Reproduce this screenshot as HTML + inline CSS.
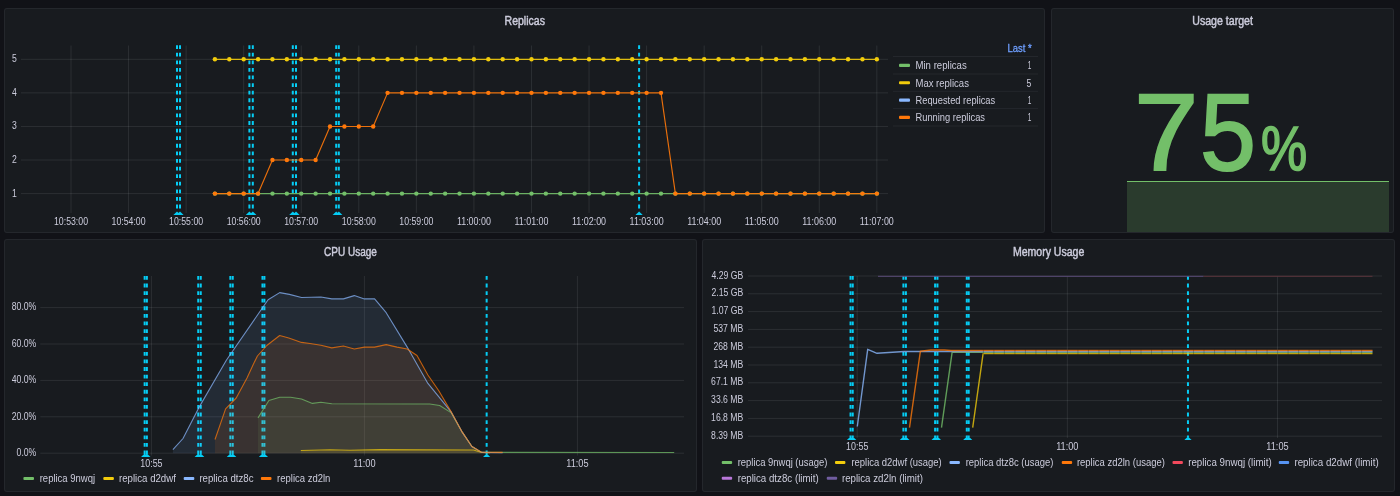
<!DOCTYPE html>
<html><head><meta charset="utf-8"><style>
html,body{margin:0;padding:0;}
body{width:1400px;height:496px;overflow:hidden;background:#111217;position:relative;font-family:"Liberation Sans",sans-serif;}
.p{position:absolute;box-sizing:border-box;background:#181b1f;border:1px solid rgba(204,204,220,0.07);border-radius:3px;}
.t{position:absolute;font-size:12px;color:#ccccdc;white-space:nowrap;}
svg{position:absolute;left:0;top:0;will-change:transform;}
svg text{font-family:"Liberation Sans",sans-serif;fill:#ccccdc;}
</style></head><body>
<div class="p" style="left:4px;top:8px;width:1041px;height:225px"></div>
<div class="p" style="left:1051px;top:8px;width:343px;height:225px"></div>
<div class="p" style="left:4px;top:239px;width:693px;height:253px"></div>
<div class="p" style="left:702px;top:239px;width:693px;height:253px"></div>
<svg width="1400" height="496" viewBox="0 0 1400 496">
<text x="524.75" y="25.1" font-size="12" text-anchor="middle" textLength="40.3" lengthAdjust="spacingAndGlyphs" stroke="#ccccdc" stroke-width="0.45">Replicas</text>
<text x="1222.6" y="25.0" font-size="12" text-anchor="middle" textLength="60.6" lengthAdjust="spacingAndGlyphs" stroke="#ccccdc" stroke-width="0.45">Usage target</text>
<text x="350.45" y="255.7" font-size="12" text-anchor="middle" textLength="52.9" lengthAdjust="spacingAndGlyphs" stroke="#ccccdc" stroke-width="0.45">CPU Usage</text>
<text x="1048.6" y="255.7" font-size="12" text-anchor="middle" textLength="71.4" lengthAdjust="spacingAndGlyphs" stroke="#ccccdc" stroke-width="0.45">Memory Usage</text>
<line x1="21.00" y1="193.60" x2="888.00" y2="193.60" stroke="rgba(240,250,255,0.09)" stroke-width="1" />
<text x="16.70" y="196.60" font-size="10" text-anchor="end" textLength="4.80" lengthAdjust="spacingAndGlyphs" >1</text>
<line x1="21.00" y1="160.02" x2="888.00" y2="160.02" stroke="rgba(240,250,255,0.09)" stroke-width="1" />
<text x="16.70" y="163.02" font-size="10" text-anchor="end" textLength="4.80" lengthAdjust="spacingAndGlyphs" >2</text>
<line x1="21.00" y1="126.45" x2="888.00" y2="126.45" stroke="rgba(240,250,255,0.09)" stroke-width="1" />
<text x="16.70" y="129.45" font-size="10" text-anchor="end" textLength="4.80" lengthAdjust="spacingAndGlyphs" >3</text>
<line x1="21.00" y1="92.87" x2="888.00" y2="92.87" stroke="rgba(240,250,255,0.09)" stroke-width="1" />
<text x="16.70" y="95.87" font-size="10" text-anchor="end" textLength="4.80" lengthAdjust="spacingAndGlyphs" >4</text>
<line x1="21.00" y1="59.30" x2="888.00" y2="59.30" stroke="rgba(240,250,255,0.09)" stroke-width="1" />
<text x="16.70" y="62.30" font-size="10" text-anchor="end" textLength="4.80" lengthAdjust="spacingAndGlyphs" >5</text>
<line x1="71.00" y1="45.50" x2="71.00" y2="213.00" stroke="rgba(240,250,255,0.09)" stroke-width="1" />
<text x="71.00" y="224.60" font-size="10" text-anchor="middle" textLength="34.00" lengthAdjust="spacingAndGlyphs" >10:53:00</text>
<line x1="128.56" y1="45.50" x2="128.56" y2="213.00" stroke="rgba(240,250,255,0.09)" stroke-width="1" />
<text x="128.56" y="224.60" font-size="10" text-anchor="middle" textLength="34.00" lengthAdjust="spacingAndGlyphs" >10:54:00</text>
<line x1="186.12" y1="45.50" x2="186.12" y2="213.00" stroke="rgba(240,250,255,0.09)" stroke-width="1" />
<text x="186.12" y="224.60" font-size="10" text-anchor="middle" textLength="34.00" lengthAdjust="spacingAndGlyphs" >10:55:00</text>
<line x1="243.68" y1="45.50" x2="243.68" y2="213.00" stroke="rgba(240,250,255,0.09)" stroke-width="1" />
<text x="243.68" y="224.60" font-size="10" text-anchor="middle" textLength="34.00" lengthAdjust="spacingAndGlyphs" >10:56:00</text>
<line x1="301.24" y1="45.50" x2="301.24" y2="213.00" stroke="rgba(240,250,255,0.09)" stroke-width="1" />
<text x="301.24" y="224.60" font-size="10" text-anchor="middle" textLength="34.00" lengthAdjust="spacingAndGlyphs" >10:57:00</text>
<line x1="358.80" y1="45.50" x2="358.80" y2="213.00" stroke="rgba(240,250,255,0.09)" stroke-width="1" />
<text x="358.80" y="224.60" font-size="10" text-anchor="middle" textLength="34.00" lengthAdjust="spacingAndGlyphs" >10:58:00</text>
<line x1="416.36" y1="45.50" x2="416.36" y2="213.00" stroke="rgba(240,250,255,0.09)" stroke-width="1" />
<text x="416.36" y="224.60" font-size="10" text-anchor="middle" textLength="34.00" lengthAdjust="spacingAndGlyphs" >10:59:00</text>
<line x1="473.92" y1="45.50" x2="473.92" y2="213.00" stroke="rgba(240,250,255,0.09)" stroke-width="1" />
<text x="473.92" y="224.60" font-size="10" text-anchor="middle" textLength="34.00" lengthAdjust="spacingAndGlyphs" >11:00:00</text>
<line x1="531.48" y1="45.50" x2="531.48" y2="213.00" stroke="rgba(240,250,255,0.09)" stroke-width="1" />
<text x="531.48" y="224.60" font-size="10" text-anchor="middle" textLength="34.00" lengthAdjust="spacingAndGlyphs" >11:01:00</text>
<line x1="589.04" y1="45.50" x2="589.04" y2="213.00" stroke="rgba(240,250,255,0.09)" stroke-width="1" />
<text x="589.04" y="224.60" font-size="10" text-anchor="middle" textLength="34.00" lengthAdjust="spacingAndGlyphs" >11:02:00</text>
<line x1="646.60" y1="45.50" x2="646.60" y2="213.00" stroke="rgba(240,250,255,0.09)" stroke-width="1" />
<text x="646.60" y="224.60" font-size="10" text-anchor="middle" textLength="34.00" lengthAdjust="spacingAndGlyphs" >11:03:00</text>
<line x1="704.16" y1="45.50" x2="704.16" y2="213.00" stroke="rgba(240,250,255,0.09)" stroke-width="1" />
<text x="704.16" y="224.60" font-size="10" text-anchor="middle" textLength="34.00" lengthAdjust="spacingAndGlyphs" >11:04:00</text>
<line x1="761.72" y1="45.50" x2="761.72" y2="213.00" stroke="rgba(240,250,255,0.09)" stroke-width="1" />
<text x="761.72" y="224.60" font-size="10" text-anchor="middle" textLength="34.00" lengthAdjust="spacingAndGlyphs" >11:05:00</text>
<line x1="819.28" y1="45.50" x2="819.28" y2="213.00" stroke="rgba(240,250,255,0.09)" stroke-width="1" />
<text x="819.28" y="224.60" font-size="10" text-anchor="middle" textLength="34.00" lengthAdjust="spacingAndGlyphs" >11:06:00</text>
<line x1="876.84" y1="45.50" x2="876.84" y2="213.00" stroke="rgba(240,250,255,0.09)" stroke-width="1" />
<text x="876.84" y="224.60" font-size="10" text-anchor="middle" textLength="34.00" lengthAdjust="spacingAndGlyphs" >11:07:00</text>
<line x1="177.00" y1="45.20" x2="177.00" y2="212.00" stroke="#05cdf5" stroke-width="2" stroke-dasharray="3.8 3.79"/>
<line x1="180.00" y1="45.20" x2="180.00" y2="212.00" stroke="#05cdf5" stroke-width="2" stroke-dasharray="3.8 3.79"/>
<line x1="249.40" y1="45.20" x2="249.40" y2="212.00" stroke="#05cdf5" stroke-width="2" stroke-dasharray="3.8 3.79"/>
<line x1="252.80" y1="45.20" x2="252.80" y2="212.00" stroke="#05cdf5" stroke-width="2" stroke-dasharray="3.8 3.79"/>
<line x1="292.80" y1="45.20" x2="292.80" y2="212.00" stroke="#05cdf5" stroke-width="2" stroke-dasharray="3.8 3.79"/>
<line x1="296.00" y1="45.20" x2="296.00" y2="212.00" stroke="#05cdf5" stroke-width="2" stroke-dasharray="3.8 3.79"/>
<line x1="336.20" y1="45.20" x2="336.20" y2="212.00" stroke="#05cdf5" stroke-width="2" stroke-dasharray="3.8 3.79"/>
<line x1="338.80" y1="45.20" x2="338.80" y2="212.00" stroke="#05cdf5" stroke-width="2" stroke-dasharray="3.8 3.79"/>
<line x1="639.10" y1="45.20" x2="639.10" y2="212.00" stroke="#05cdf5" stroke-width="2" stroke-dasharray="3.8 3.79"/>
<path d="M173.40,215.00 L177.00,211.40 L180.60,215.00 Z" fill="#05cdf5"/>
<path d="M176.40,215.00 L180.00,211.40 L183.60,215.00 Z" fill="#05cdf5"/>
<path d="M245.80,215.00 L249.40,211.40 L253.00,215.00 Z" fill="#05cdf5"/>
<path d="M249.20,215.00 L252.80,211.40 L256.40,215.00 Z" fill="#05cdf5"/>
<path d="M289.20,215.00 L292.80,211.40 L296.40,215.00 Z" fill="#05cdf5"/>
<path d="M292.40,215.00 L296.00,211.40 L299.60,215.00 Z" fill="#05cdf5"/>
<path d="M332.60,215.00 L336.20,211.40 L339.80,215.00 Z" fill="#05cdf5"/>
<path d="M335.20,215.00 L338.80,211.40 L342.40,215.00 Z" fill="#05cdf5"/>
<path d="M635.50,215.00 L639.10,211.40 L642.70,215.00 Z" fill="#05cdf5"/>
<polyline points="214.90,193.60 229.29,193.60 243.68,193.60 258.07,193.60 272.46,193.60 286.85,193.60 301.24,193.60 315.63,193.60 330.02,193.60 344.41,193.60 358.80,193.60 373.19,193.60 387.58,193.60 401.97,193.60 416.36,193.60 430.75,193.60 445.14,193.60 459.53,193.60 473.92,193.60 488.31,193.60 502.70,193.60 517.09,193.60 531.48,193.60 545.87,193.60 560.26,193.60 574.65,193.60 589.04,193.60 603.43,193.60 617.82,193.60 632.21,193.60 646.60,193.60 660.99,193.60 675.38,193.60 689.77,193.60 704.16,193.60 718.55,193.60 732.94,193.60 747.33,193.60 761.72,193.60 776.11,193.60 790.50,193.60 804.89,193.60 819.28,193.60 833.67,193.60 848.06,193.60 862.45,193.60 876.84,193.60" fill="none" stroke="#73BF69" stroke-width="1.15" stroke-linejoin="round" stroke-opacity="0.9"/>
<circle cx="214.90" cy="193.60" r="2.2" fill="#73BF69"/>
<circle cx="229.29" cy="193.60" r="2.2" fill="#73BF69"/>
<circle cx="243.68" cy="193.60" r="2.2" fill="#73BF69"/>
<circle cx="258.07" cy="193.60" r="2.2" fill="#73BF69"/>
<circle cx="272.46" cy="193.60" r="2.2" fill="#73BF69"/>
<circle cx="286.85" cy="193.60" r="2.2" fill="#73BF69"/>
<circle cx="301.24" cy="193.60" r="2.2" fill="#73BF69"/>
<circle cx="315.63" cy="193.60" r="2.2" fill="#73BF69"/>
<circle cx="330.02" cy="193.60" r="2.2" fill="#73BF69"/>
<circle cx="344.41" cy="193.60" r="2.2" fill="#73BF69"/>
<circle cx="358.80" cy="193.60" r="2.2" fill="#73BF69"/>
<circle cx="373.19" cy="193.60" r="2.2" fill="#73BF69"/>
<circle cx="387.58" cy="193.60" r="2.2" fill="#73BF69"/>
<circle cx="401.97" cy="193.60" r="2.2" fill="#73BF69"/>
<circle cx="416.36" cy="193.60" r="2.2" fill="#73BF69"/>
<circle cx="430.75" cy="193.60" r="2.2" fill="#73BF69"/>
<circle cx="445.14" cy="193.60" r="2.2" fill="#73BF69"/>
<circle cx="459.53" cy="193.60" r="2.2" fill="#73BF69"/>
<circle cx="473.92" cy="193.60" r="2.2" fill="#73BF69"/>
<circle cx="488.31" cy="193.60" r="2.2" fill="#73BF69"/>
<circle cx="502.70" cy="193.60" r="2.2" fill="#73BF69"/>
<circle cx="517.09" cy="193.60" r="2.2" fill="#73BF69"/>
<circle cx="531.48" cy="193.60" r="2.2" fill="#73BF69"/>
<circle cx="545.87" cy="193.60" r="2.2" fill="#73BF69"/>
<circle cx="560.26" cy="193.60" r="2.2" fill="#73BF69"/>
<circle cx="574.65" cy="193.60" r="2.2" fill="#73BF69"/>
<circle cx="589.04" cy="193.60" r="2.2" fill="#73BF69"/>
<circle cx="603.43" cy="193.60" r="2.2" fill="#73BF69"/>
<circle cx="617.82" cy="193.60" r="2.2" fill="#73BF69"/>
<circle cx="632.21" cy="193.60" r="2.2" fill="#73BF69"/>
<circle cx="646.60" cy="193.60" r="2.2" fill="#73BF69"/>
<circle cx="660.99" cy="193.60" r="2.2" fill="#73BF69"/>
<circle cx="675.38" cy="193.60" r="2.2" fill="#73BF69"/>
<circle cx="689.77" cy="193.60" r="2.2" fill="#73BF69"/>
<circle cx="704.16" cy="193.60" r="2.2" fill="#73BF69"/>
<circle cx="718.55" cy="193.60" r="2.2" fill="#73BF69"/>
<circle cx="732.94" cy="193.60" r="2.2" fill="#73BF69"/>
<circle cx="747.33" cy="193.60" r="2.2" fill="#73BF69"/>
<circle cx="761.72" cy="193.60" r="2.2" fill="#73BF69"/>
<circle cx="776.11" cy="193.60" r="2.2" fill="#73BF69"/>
<circle cx="790.50" cy="193.60" r="2.2" fill="#73BF69"/>
<circle cx="804.89" cy="193.60" r="2.2" fill="#73BF69"/>
<circle cx="819.28" cy="193.60" r="2.2" fill="#73BF69"/>
<circle cx="833.67" cy="193.60" r="2.2" fill="#73BF69"/>
<circle cx="848.06" cy="193.60" r="2.2" fill="#73BF69"/>
<circle cx="862.45" cy="193.60" r="2.2" fill="#73BF69"/>
<circle cx="876.84" cy="193.60" r="2.2" fill="#73BF69"/>
<polyline points="214.90,59.30 229.29,59.30 243.68,59.30 258.07,59.30 272.46,59.30 286.85,59.30 301.24,59.30 315.63,59.30 330.02,59.30 344.41,59.30 358.80,59.30 373.19,59.30 387.58,59.30 401.97,59.30 416.36,59.30 430.75,59.30 445.14,59.30 459.53,59.30 473.92,59.30 488.31,59.30 502.70,59.30 517.09,59.30 531.48,59.30 545.87,59.30 560.26,59.30 574.65,59.30 589.04,59.30 603.43,59.30 617.82,59.30 632.21,59.30 646.60,59.30 660.99,59.30 675.38,59.30 689.77,59.30 704.16,59.30 718.55,59.30 732.94,59.30 747.33,59.30 761.72,59.30 776.11,59.30 790.50,59.30 804.89,59.30 819.28,59.30 833.67,59.30 848.06,59.30 862.45,59.30 876.84,59.30" fill="none" stroke="#F2CC0C" stroke-width="1.15" stroke-linejoin="round" stroke-opacity="0.9"/>
<circle cx="214.90" cy="59.30" r="2.2" fill="#F2CC0C"/>
<circle cx="229.29" cy="59.30" r="2.2" fill="#F2CC0C"/>
<circle cx="243.68" cy="59.30" r="2.2" fill="#F2CC0C"/>
<circle cx="258.07" cy="59.30" r="2.2" fill="#F2CC0C"/>
<circle cx="272.46" cy="59.30" r="2.2" fill="#F2CC0C"/>
<circle cx="286.85" cy="59.30" r="2.2" fill="#F2CC0C"/>
<circle cx="301.24" cy="59.30" r="2.2" fill="#F2CC0C"/>
<circle cx="315.63" cy="59.30" r="2.2" fill="#F2CC0C"/>
<circle cx="330.02" cy="59.30" r="2.2" fill="#F2CC0C"/>
<circle cx="344.41" cy="59.30" r="2.2" fill="#F2CC0C"/>
<circle cx="358.80" cy="59.30" r="2.2" fill="#F2CC0C"/>
<circle cx="373.19" cy="59.30" r="2.2" fill="#F2CC0C"/>
<circle cx="387.58" cy="59.30" r="2.2" fill="#F2CC0C"/>
<circle cx="401.97" cy="59.30" r="2.2" fill="#F2CC0C"/>
<circle cx="416.36" cy="59.30" r="2.2" fill="#F2CC0C"/>
<circle cx="430.75" cy="59.30" r="2.2" fill="#F2CC0C"/>
<circle cx="445.14" cy="59.30" r="2.2" fill="#F2CC0C"/>
<circle cx="459.53" cy="59.30" r="2.2" fill="#F2CC0C"/>
<circle cx="473.92" cy="59.30" r="2.2" fill="#F2CC0C"/>
<circle cx="488.31" cy="59.30" r="2.2" fill="#F2CC0C"/>
<circle cx="502.70" cy="59.30" r="2.2" fill="#F2CC0C"/>
<circle cx="517.09" cy="59.30" r="2.2" fill="#F2CC0C"/>
<circle cx="531.48" cy="59.30" r="2.2" fill="#F2CC0C"/>
<circle cx="545.87" cy="59.30" r="2.2" fill="#F2CC0C"/>
<circle cx="560.26" cy="59.30" r="2.2" fill="#F2CC0C"/>
<circle cx="574.65" cy="59.30" r="2.2" fill="#F2CC0C"/>
<circle cx="589.04" cy="59.30" r="2.2" fill="#F2CC0C"/>
<circle cx="603.43" cy="59.30" r="2.2" fill="#F2CC0C"/>
<circle cx="617.82" cy="59.30" r="2.2" fill="#F2CC0C"/>
<circle cx="632.21" cy="59.30" r="2.2" fill="#F2CC0C"/>
<circle cx="646.60" cy="59.30" r="2.2" fill="#F2CC0C"/>
<circle cx="660.99" cy="59.30" r="2.2" fill="#F2CC0C"/>
<circle cx="675.38" cy="59.30" r="2.2" fill="#F2CC0C"/>
<circle cx="689.77" cy="59.30" r="2.2" fill="#F2CC0C"/>
<circle cx="704.16" cy="59.30" r="2.2" fill="#F2CC0C"/>
<circle cx="718.55" cy="59.30" r="2.2" fill="#F2CC0C"/>
<circle cx="732.94" cy="59.30" r="2.2" fill="#F2CC0C"/>
<circle cx="747.33" cy="59.30" r="2.2" fill="#F2CC0C"/>
<circle cx="761.72" cy="59.30" r="2.2" fill="#F2CC0C"/>
<circle cx="776.11" cy="59.30" r="2.2" fill="#F2CC0C"/>
<circle cx="790.50" cy="59.30" r="2.2" fill="#F2CC0C"/>
<circle cx="804.89" cy="59.30" r="2.2" fill="#F2CC0C"/>
<circle cx="819.28" cy="59.30" r="2.2" fill="#F2CC0C"/>
<circle cx="833.67" cy="59.30" r="2.2" fill="#F2CC0C"/>
<circle cx="848.06" cy="59.30" r="2.2" fill="#F2CC0C"/>
<circle cx="862.45" cy="59.30" r="2.2" fill="#F2CC0C"/>
<circle cx="876.84" cy="59.30" r="2.2" fill="#F2CC0C"/>
<polyline points="214.90,193.60 229.29,193.60 243.68,193.60 258.07,193.60 272.46,160.02 286.85,160.02 301.24,160.02 315.63,160.02 330.02,126.45 344.41,126.45 358.80,126.45 373.19,126.45 387.58,92.87 401.97,92.87 416.36,92.87 430.75,92.87 445.14,92.87 459.53,92.87 473.92,92.87 488.31,92.87 502.70,92.87 517.09,92.87 531.48,92.87 545.87,92.87 560.26,92.87 574.65,92.87 589.04,92.87 603.43,92.87 617.82,92.87 632.21,92.87 646.60,92.87 660.99,92.87 675.38,193.60 689.77,193.60 704.16,193.60 718.55,193.60 732.94,193.60 747.33,193.60 761.72,193.60 776.11,193.60 790.50,193.60 804.89,193.60 819.28,193.60 833.67,193.60 848.06,193.60 862.45,193.60 876.84,193.60" fill="none" stroke="#FF780A" stroke-width="1.15" stroke-linejoin="round" stroke-opacity="0.9"/>
<circle cx="214.90" cy="193.60" r="2.2" fill="#FF780A"/>
<circle cx="229.29" cy="193.60" r="2.2" fill="#FF780A"/>
<circle cx="243.68" cy="193.60" r="2.2" fill="#FF780A"/>
<circle cx="258.07" cy="193.60" r="2.2" fill="#FF780A"/>
<circle cx="272.46" cy="160.02" r="2.2" fill="#FF780A"/>
<circle cx="286.85" cy="160.02" r="2.2" fill="#FF780A"/>
<circle cx="301.24" cy="160.02" r="2.2" fill="#FF780A"/>
<circle cx="315.63" cy="160.02" r="2.2" fill="#FF780A"/>
<circle cx="330.02" cy="126.45" r="2.2" fill="#FF780A"/>
<circle cx="344.41" cy="126.45" r="2.2" fill="#FF780A"/>
<circle cx="358.80" cy="126.45" r="2.2" fill="#FF780A"/>
<circle cx="373.19" cy="126.45" r="2.2" fill="#FF780A"/>
<circle cx="387.58" cy="92.87" r="2.2" fill="#FF780A"/>
<circle cx="401.97" cy="92.87" r="2.2" fill="#FF780A"/>
<circle cx="416.36" cy="92.87" r="2.2" fill="#FF780A"/>
<circle cx="430.75" cy="92.87" r="2.2" fill="#FF780A"/>
<circle cx="445.14" cy="92.87" r="2.2" fill="#FF780A"/>
<circle cx="459.53" cy="92.87" r="2.2" fill="#FF780A"/>
<circle cx="473.92" cy="92.87" r="2.2" fill="#FF780A"/>
<circle cx="488.31" cy="92.87" r="2.2" fill="#FF780A"/>
<circle cx="502.70" cy="92.87" r="2.2" fill="#FF780A"/>
<circle cx="517.09" cy="92.87" r="2.2" fill="#FF780A"/>
<circle cx="531.48" cy="92.87" r="2.2" fill="#FF780A"/>
<circle cx="545.87" cy="92.87" r="2.2" fill="#FF780A"/>
<circle cx="560.26" cy="92.87" r="2.2" fill="#FF780A"/>
<circle cx="574.65" cy="92.87" r="2.2" fill="#FF780A"/>
<circle cx="589.04" cy="92.87" r="2.2" fill="#FF780A"/>
<circle cx="603.43" cy="92.87" r="2.2" fill="#FF780A"/>
<circle cx="617.82" cy="92.87" r="2.2" fill="#FF780A"/>
<circle cx="632.21" cy="92.87" r="2.2" fill="#FF780A"/>
<circle cx="646.60" cy="92.87" r="2.2" fill="#FF780A"/>
<circle cx="660.99" cy="92.87" r="2.2" fill="#FF780A"/>
<circle cx="675.38" cy="193.60" r="2.2" fill="#FF780A"/>
<circle cx="689.77" cy="193.60" r="2.2" fill="#FF780A"/>
<circle cx="704.16" cy="193.60" r="2.2" fill="#FF780A"/>
<circle cx="718.55" cy="193.60" r="2.2" fill="#FF780A"/>
<circle cx="732.94" cy="193.60" r="2.2" fill="#FF780A"/>
<circle cx="747.33" cy="193.60" r="2.2" fill="#FF780A"/>
<circle cx="761.72" cy="193.60" r="2.2" fill="#FF780A"/>
<circle cx="776.11" cy="193.60" r="2.2" fill="#FF780A"/>
<circle cx="790.50" cy="193.60" r="2.2" fill="#FF780A"/>
<circle cx="804.89" cy="193.60" r="2.2" fill="#FF780A"/>
<circle cx="819.28" cy="193.60" r="2.2" fill="#FF780A"/>
<circle cx="833.67" cy="193.60" r="2.2" fill="#FF780A"/>
<circle cx="848.06" cy="193.60" r="2.2" fill="#FF780A"/>
<circle cx="862.45" cy="193.60" r="2.2" fill="#FF780A"/>
<circle cx="876.84" cy="193.60" r="2.2" fill="#FF780A"/>
<text x="1031.70" y="52.00" font-size="10" text-anchor="end" textLength="24.10" lengthAdjust="spacingAndGlyphs" style="fill:#6E9FFF" stroke="#6E9FFF" stroke-width="0.3">Last *</text>
<line x1="893.00" y1="56.50" x2="1038.00" y2="56.50" stroke="rgba(204,204,220,0.07)" stroke-width="1" />
<line x1="893.00" y1="74.00" x2="1038.00" y2="74.00" stroke="rgba(204,204,220,0.07)" stroke-width="1" />
<line x1="893.00" y1="91.30" x2="1038.00" y2="91.30" stroke="rgba(204,204,220,0.07)" stroke-width="1" />
<line x1="893.00" y1="108.60" x2="1038.00" y2="108.60" stroke="rgba(204,204,220,0.07)" stroke-width="1" />
<line x1="893.00" y1="126.00" x2="1038.00" y2="126.00" stroke="rgba(204,204,220,0.07)" stroke-width="1" />
<rect x="899" y="63.80" width="11" height="3.2" rx="1" fill="#73BF69"/>
<text x="915.50" y="69.40" font-size="10" textLength="51.20" lengthAdjust="spacingAndGlyphs" >Min replicas</text>
<text x="1031.40" y="69.40" font-size="10" text-anchor="end" textLength="3.60" lengthAdjust="spacingAndGlyphs" >1</text>
<rect x="899" y="81.15" width="11" height="3.2" rx="1" fill="#F2CC0C"/>
<text x="915.50" y="86.75" font-size="10" textLength="53.40" lengthAdjust="spacingAndGlyphs" >Max replicas</text>
<text x="1031.40" y="86.75" font-size="10" text-anchor="end" textLength="4.80" lengthAdjust="spacingAndGlyphs" >5</text>
<rect x="899" y="98.50" width="11" height="3.2" rx="1" fill="#8AB8FF"/>
<text x="915.50" y="104.10" font-size="10" textLength="79.70" lengthAdjust="spacingAndGlyphs" >Requested replicas</text>
<text x="1031.40" y="104.10" font-size="10" text-anchor="end" textLength="3.60" lengthAdjust="spacingAndGlyphs" >1</text>
<rect x="899" y="115.85" width="11" height="3.2" rx="1" fill="#FF780A"/>
<text x="915.50" y="121.45" font-size="10" textLength="69.50" lengthAdjust="spacingAndGlyphs" >Running replicas</text>
<text x="1031.40" y="121.45" font-size="10" text-anchor="end" textLength="3.60" lengthAdjust="spacingAndGlyphs" >1</text>
<rect x="1127" y="181" width="262" height="51" fill="#73BF69" fill-opacity="0.2"/>
<line x1="1127.00" y1="181.50" x2="1389.00" y2="181.50" stroke="#73BF69" stroke-width="1" />
<text x="1134.00" y="169.80" font-size="110" textLength="64.50" lengthAdjust="spacingAndGlyphs" style="fill:#73BF69" stroke="#73BF69" stroke-width="2">7</text>
<text x="1199.90" y="169.60" font-size="110" textLength="56.00" lengthAdjust="spacingAndGlyphs" style="fill:#73BF69" stroke="#73BF69" stroke-width="2">5</text>
<text x="1261.10" y="169.50" font-size="63" textLength="46.20" lengthAdjust="spacingAndGlyphs" style="fill:#73BF69" stroke="#73BF69" stroke-width="1.6">%</text>
<line x1="40.30" y1="453.20" x2="684.00" y2="453.20" stroke="rgba(240,250,255,0.09)" stroke-width="1" />
<text x="36.30" y="456.00" font-size="10" text-anchor="end" textLength="19.72" lengthAdjust="spacingAndGlyphs" >0.0%</text>
<line x1="40.30" y1="416.80" x2="684.00" y2="416.80" stroke="rgba(240,250,255,0.09)" stroke-width="1" />
<text x="36.30" y="419.60" font-size="10" text-anchor="end" textLength="24.53" lengthAdjust="spacingAndGlyphs" >20.0%</text>
<line x1="40.30" y1="380.40" x2="684.00" y2="380.40" stroke="rgba(240,250,255,0.09)" stroke-width="1" />
<text x="36.30" y="383.20" font-size="10" text-anchor="end" textLength="24.53" lengthAdjust="spacingAndGlyphs" >40.0%</text>
<line x1="40.30" y1="344.00" x2="684.00" y2="344.00" stroke="rgba(240,250,255,0.09)" stroke-width="1" />
<text x="36.30" y="346.80" font-size="10" text-anchor="end" textLength="24.53" lengthAdjust="spacingAndGlyphs" >60.0%</text>
<line x1="40.30" y1="307.60" x2="684.00" y2="307.60" stroke="rgba(240,250,255,0.09)" stroke-width="1" />
<text x="36.30" y="310.40" font-size="10" text-anchor="end" textLength="24.53" lengthAdjust="spacingAndGlyphs" >80.0%</text>
<line x1="151.40" y1="276.00" x2="151.40" y2="455.50" stroke="rgba(240,250,255,0.09)" stroke-width="1" />
<text x="151.40" y="466.60" font-size="10" text-anchor="middle" textLength="22.30" lengthAdjust="spacingAndGlyphs" >10:55</text>
<line x1="364.40" y1="276.00" x2="364.40" y2="455.50" stroke="rgba(240,250,255,0.09)" stroke-width="1" />
<text x="364.40" y="466.60" font-size="10" text-anchor="middle" textLength="22.30" lengthAdjust="spacingAndGlyphs" >11:00</text>
<line x1="577.40" y1="276.00" x2="577.40" y2="455.50" stroke="rgba(240,250,255,0.09)" stroke-width="1" />
<text x="577.40" y="466.60" font-size="10" text-anchor="middle" textLength="22.30" lengthAdjust="spacingAndGlyphs" >11:05</text>
<line x1="144.65" y1="276.00" x2="144.65" y2="454.00" stroke="#05cdf5" stroke-width="2" stroke-dasharray="3.8 3.79"/>
<line x1="146.87" y1="276.00" x2="146.87" y2="454.00" stroke="#05cdf5" stroke-width="2" stroke-dasharray="3.8 3.79"/>
<line x1="198.23" y1="276.00" x2="198.23" y2="454.00" stroke="#05cdf5" stroke-width="2" stroke-dasharray="3.8 3.79"/>
<line x1="200.75" y1="276.00" x2="200.75" y2="454.00" stroke="#05cdf5" stroke-width="2" stroke-dasharray="3.8 3.79"/>
<line x1="230.35" y1="276.00" x2="230.35" y2="454.00" stroke="#05cdf5" stroke-width="2" stroke-dasharray="3.8 3.79"/>
<line x1="232.72" y1="276.00" x2="232.72" y2="454.00" stroke="#05cdf5" stroke-width="2" stroke-dasharray="3.8 3.79"/>
<line x1="262.47" y1="276.00" x2="262.47" y2="454.00" stroke="#05cdf5" stroke-width="2" stroke-dasharray="3.8 3.79"/>
<line x1="264.40" y1="276.00" x2="264.40" y2="454.00" stroke="#05cdf5" stroke-width="2" stroke-dasharray="3.8 3.79"/>
<line x1="486.65" y1="276.00" x2="486.65" y2="454.00" stroke="#05cdf5" stroke-width="2" stroke-dasharray="3.8 3.79"/>
<path d="M141.05,457.00 L144.65,453.40 L148.25,457.00 Z" fill="#05cdf5"/>
<path d="M143.27,457.00 L146.87,453.40 L150.47,457.00 Z" fill="#05cdf5"/>
<path d="M194.63,457.00 L198.23,453.40 L201.83,457.00 Z" fill="#05cdf5"/>
<path d="M197.15,457.00 L200.75,453.40 L204.35,457.00 Z" fill="#05cdf5"/>
<path d="M226.75,457.00 L230.35,453.40 L233.95,457.00 Z" fill="#05cdf5"/>
<path d="M229.12,457.00 L232.72,453.40 L236.32,457.00 Z" fill="#05cdf5"/>
<path d="M258.87,457.00 L262.47,453.40 L266.07,457.00 Z" fill="#05cdf5"/>
<path d="M260.80,457.00 L264.40,453.40 L268.00,457.00 Z" fill="#05cdf5"/>
<path d="M483.05,457.00 L486.65,453.40 L490.25,457.00 Z" fill="#05cdf5"/>
<path d="M258.00,453.20 L258.00,417.90 L268.90,400.50 L279.70,397.20 L290.60,397.20 L301.50,399.00 L312.40,403.40 L320.90,402.30 L331.80,403.80 L429.70,404.00 L439.70,405.50 L451.00,412.60 L462.40,432.40 L471.90,446.50 L481.60,452.40 L674.20,452.50 L674.20,453.20 Z" fill="#73BF69" fill-opacity="0.1"/>
<path d="M300.80,453.20 L300.80,450.50 L330.00,449.80 L350.00,450.20 L380.00,449.60 L473.50,450.00 L481.60,452.50 L490.00,452.60 L490.00,453.20 Z" fill="#F2CC0C" fill-opacity="0.1"/>
<path d="M172.90,453.20 L172.90,449.70 L183.00,438.50 L198.70,407.90 L226.50,360.00 L263.20,306.80 L268.10,299.80 L279.70,292.60 L289.40,294.40 L301.50,297.50 L320.90,297.00 L331.80,298.90 L343.40,298.90 L354.30,295.60 L364.40,298.90 L374.60,298.90 L386.20,312.70 L407.20,347.10 L427.90,383.40 L451.50,412.40 L462.40,432.40 L471.90,446.50 L481.60,452.40 L502.60,452.80 L502.60,453.20 Z" fill="#8AB8FF" fill-opacity="0.1"/>
<path d="M215.00,453.20 L215.00,439.50 L225.60,408.90 L236.20,398.00 L247.00,378.00 L253.00,365.00 L257.40,356.00 L266.80,345.50 L279.70,335.50 L288.80,338.00 L301.50,342.40 L310.00,343.50 L320.90,345.30 L331.80,347.90 L343.40,346.00 L354.30,349.00 L364.40,347.10 L374.60,347.10 L386.20,344.60 L397.10,347.10 L407.20,349.00 L417.00,355.50 L427.90,375.00 L438.80,390.70 L451.50,412.40 L462.40,432.40 L471.90,446.50 L481.60,452.20 L502.60,452.40 L502.60,453.20 Z" fill="#FF780A" fill-opacity="0.1"/>
<polyline points="300.80,450.50 330.00,449.80 350.00,450.20 380.00,449.60 473.50,450.00 481.60,452.50 490.00,452.60" fill="none" stroke="#F2CC0C" stroke-width="1.1" stroke-linejoin="round" stroke-opacity="0.72"/>
<polyline points="258.00,417.90 268.90,400.50 279.70,397.20 290.60,397.20 301.50,399.00 312.40,403.40 320.90,402.30 331.80,403.80 429.70,404.00 439.70,405.50 451.00,412.60 462.40,432.40 471.90,446.50 481.60,452.40 674.20,452.50" fill="none" stroke="#73BF69" stroke-width="1.1" stroke-linejoin="round" stroke-opacity="0.72"/>
<polyline points="172.90,449.70 183.00,438.50 198.70,407.90 226.50,360.00 263.20,306.80 268.10,299.80 279.70,292.60 289.40,294.40 301.50,297.50 320.90,297.00 331.80,298.90 343.40,298.90 354.30,295.60 364.40,298.90 374.60,298.90 386.20,312.70 407.20,347.10 427.90,383.40 451.50,412.40 462.40,432.40 471.90,446.50 481.60,452.40 502.60,452.80" fill="none" stroke="#8AB8FF" stroke-width="1.1" stroke-linejoin="round" stroke-opacity="0.72"/>
<polyline points="215.00,439.50 225.60,408.90 236.20,398.00 247.00,378.00 253.00,365.00 257.40,356.00 266.80,345.50 279.70,335.50 288.80,338.00 301.50,342.40 310.00,343.50 320.90,345.30 331.80,347.90 343.40,346.00 354.30,349.00 364.40,347.10 374.60,347.10 386.20,344.60 397.10,347.10 407.20,349.00 417.00,355.50 427.90,375.00 438.80,390.70 451.50,412.40 462.40,432.40 471.90,446.50 481.60,452.20 502.60,452.40" fill="none" stroke="#FF780A" stroke-width="1.1" stroke-linejoin="round" stroke-opacity="0.72"/>
<rect x="23.40" y="477.0" width="10.6" height="3" rx="1" fill="#73BF69"/>
<text x="39.70" y="482.00" font-size="10" textLength="55.40" lengthAdjust="spacingAndGlyphs" >replica 9nwqj</text>
<rect x="103.30" y="477.0" width="10.6" height="3" rx="1" fill="#F2CC0C"/>
<text x="119.00" y="482.00" font-size="10" textLength="56.90" lengthAdjust="spacingAndGlyphs" >replica d2dwf</text>
<rect x="183.70" y="477.0" width="10.6" height="3" rx="1" fill="#8AB8FF"/>
<text x="199.40" y="482.00" font-size="10" textLength="54.10" lengthAdjust="spacingAndGlyphs" >replica dtz8c</text>
<rect x="260.90" y="477.0" width="10.6" height="3" rx="1" fill="#FF780A"/>
<text x="277.10" y="482.00" font-size="10" textLength="53.30" lengthAdjust="spacingAndGlyphs" >replica zd2ln</text>
<line x1="748.00" y1="276.00" x2="1382.00" y2="276.00" stroke="rgba(240,250,255,0.09)" stroke-width="1" />
<text x="743.30" y="278.60" font-size="10" text-anchor="end" textLength="31.74" lengthAdjust="spacingAndGlyphs" >4.29 GB</text>
<line x1="748.00" y1="293.80" x2="1382.00" y2="293.80" stroke="rgba(240,250,255,0.09)" stroke-width="1" />
<text x="743.30" y="296.40" font-size="10" text-anchor="end" textLength="31.74" lengthAdjust="spacingAndGlyphs" >2.15 GB</text>
<line x1="748.00" y1="311.60" x2="1382.00" y2="311.60" stroke="rgba(240,250,255,0.09)" stroke-width="1" />
<text x="743.30" y="314.20" font-size="10" text-anchor="end" textLength="31.74" lengthAdjust="spacingAndGlyphs" >1.07 GB</text>
<line x1="748.00" y1="329.40" x2="1382.00" y2="329.40" stroke="rgba(240,250,255,0.09)" stroke-width="1" />
<text x="743.30" y="332.00" font-size="10" text-anchor="end" textLength="29.81" lengthAdjust="spacingAndGlyphs" >537 MB</text>
<line x1="748.00" y1="347.20" x2="1382.00" y2="347.20" stroke="rgba(240,250,255,0.09)" stroke-width="1" />
<text x="743.30" y="349.80" font-size="10" text-anchor="end" textLength="29.81" lengthAdjust="spacingAndGlyphs" >268 MB</text>
<line x1="748.00" y1="365.00" x2="1382.00" y2="365.00" stroke="rgba(240,250,255,0.09)" stroke-width="1" />
<text x="743.30" y="367.60" font-size="10" text-anchor="end" textLength="29.81" lengthAdjust="spacingAndGlyphs" >134 MB</text>
<line x1="748.00" y1="382.80" x2="1382.00" y2="382.80" stroke="rgba(240,250,255,0.09)" stroke-width="1" />
<text x="743.30" y="385.40" font-size="10" text-anchor="end" textLength="32.21" lengthAdjust="spacingAndGlyphs" >67.1 MB</text>
<line x1="748.00" y1="400.60" x2="1382.00" y2="400.60" stroke="rgba(240,250,255,0.09)" stroke-width="1" />
<text x="743.30" y="403.20" font-size="10" text-anchor="end" textLength="32.21" lengthAdjust="spacingAndGlyphs" >33.6 MB</text>
<line x1="748.00" y1="418.40" x2="1382.00" y2="418.40" stroke="rgba(240,250,255,0.09)" stroke-width="1" />
<text x="743.30" y="421.00" font-size="10" text-anchor="end" textLength="32.21" lengthAdjust="spacingAndGlyphs" >16.8 MB</text>
<line x1="748.00" y1="436.20" x2="1382.00" y2="436.20" stroke="rgba(240,250,255,0.09)" stroke-width="1" />
<text x="743.30" y="438.80" font-size="10" text-anchor="end" textLength="32.21" lengthAdjust="spacingAndGlyphs" >8.39 MB</text>
<line x1="857.20" y1="276.00" x2="857.20" y2="438.00" stroke="rgba(240,250,255,0.09)" stroke-width="1" />
<text x="857.20" y="450.00" font-size="10" text-anchor="middle" textLength="22.30" lengthAdjust="spacingAndGlyphs" >10:55</text>
<line x1="1067.35" y1="276.00" x2="1067.35" y2="438.00" stroke="rgba(240,250,255,0.09)" stroke-width="1" />
<text x="1067.35" y="450.00" font-size="10" text-anchor="middle" textLength="22.30" lengthAdjust="spacingAndGlyphs" >11:00</text>
<line x1="1277.50" y1="276.00" x2="1277.50" y2="438.00" stroke="rgba(240,250,255,0.09)" stroke-width="1" />
<text x="1277.50" y="450.00" font-size="10" text-anchor="middle" textLength="22.30" lengthAdjust="spacingAndGlyphs" >11:05</text>
<line x1="850.54" y1="276.00" x2="850.54" y2="437.00" stroke="#05cdf5" stroke-width="2" stroke-dasharray="3.8 3.79"/>
<line x1="852.73" y1="276.00" x2="852.73" y2="437.00" stroke="#05cdf5" stroke-width="2" stroke-dasharray="3.8 3.79"/>
<line x1="903.41" y1="276.00" x2="903.41" y2="437.00" stroke="#05cdf5" stroke-width="2" stroke-dasharray="3.8 3.79"/>
<line x1="905.89" y1="276.00" x2="905.89" y2="437.00" stroke="#05cdf5" stroke-width="2" stroke-dasharray="3.8 3.79"/>
<line x1="935.10" y1="276.00" x2="935.10" y2="437.00" stroke="#05cdf5" stroke-width="2" stroke-dasharray="3.8 3.79"/>
<line x1="937.43" y1="276.00" x2="937.43" y2="437.00" stroke="#05cdf5" stroke-width="2" stroke-dasharray="3.8 3.79"/>
<line x1="966.79" y1="276.00" x2="966.79" y2="437.00" stroke="#05cdf5" stroke-width="2" stroke-dasharray="3.8 3.79"/>
<line x1="968.69" y1="276.00" x2="968.69" y2="437.00" stroke="#05cdf5" stroke-width="2" stroke-dasharray="3.8 3.79"/>
<line x1="1187.96" y1="276.00" x2="1187.96" y2="437.00" stroke="#05cdf5" stroke-width="2" stroke-dasharray="3.8 3.79"/>
<path d="M846.94,440.00 L850.54,436.40 L854.14,440.00 Z" fill="#05cdf5"/>
<path d="M849.13,440.00 L852.73,436.40 L856.33,440.00 Z" fill="#05cdf5"/>
<path d="M899.81,440.00 L903.41,436.40 L907.01,440.00 Z" fill="#05cdf5"/>
<path d="M902.29,440.00 L905.89,436.40 L909.49,440.00 Z" fill="#05cdf5"/>
<path d="M931.50,440.00 L935.10,436.40 L938.70,440.00 Z" fill="#05cdf5"/>
<path d="M933.83,440.00 L937.43,436.40 L941.03,440.00 Z" fill="#05cdf5"/>
<path d="M963.19,440.00 L966.79,436.40 L970.39,440.00 Z" fill="#05cdf5"/>
<path d="M965.09,440.00 L968.69,436.40 L972.29,440.00 Z" fill="#05cdf5"/>
<path d="M1184.36,440.00 L1187.96,436.40 L1191.56,440.00 Z" fill="#05cdf5"/>
<line x1="878.00" y1="276.30" x2="1203.60" y2="276.30" stroke="#5a4c78" stroke-width="1" />
<line x1="1203.60" y1="276.30" x2="1372.50" y2="276.30" stroke="#5a343b" stroke-width="1" />
<polyline points="941.50,427.60 952.10,352.40 1372.50,352.40" fill="none" stroke="#73BF69" stroke-width="1.4" stroke-linejoin="round" stroke-opacity="0.78"/>
<polyline points="972.70,427.60 983.10,353.60 1372.50,353.60" fill="none" stroke="#F2CC0C" stroke-width="1.4" stroke-linejoin="round" stroke-opacity="0.78"/>
<polyline points="857.30,426.50 867.70,349.30 877.00,353.30 904.30,351.50 1372.50,351.50" fill="none" stroke="#8AB8FF" stroke-width="1.4" stroke-linejoin="round" stroke-opacity="0.78"/>
<polyline points="909.50,427.60 920.40,351.20 931.00,350.00 944.30,350.00 951.00,350.50 1372.50,350.50" fill="none" stroke="#FF780A" stroke-width="1.4" stroke-linejoin="round" stroke-opacity="0.78"/>
<path d="M983.39,349.8 V354.6 M993.89,349.8 V354.6 M1004.40,349.8 V354.6 M1014.91,349.8 V354.6 M1025.41,349.8 V354.6 M1035.92,349.8 V354.6 M1046.43,349.8 V354.6 M1056.93,349.8 V354.6 M1067.44,349.8 V354.6 M1077.95,349.8 V354.6 M1088.46,349.8 V354.6 M1098.96,349.8 V354.6 M1109.47,349.8 V354.6 M1119.98,349.8 V354.6 M1130.48,349.8 V354.6 M1140.99,349.8 V354.6 M1151.50,349.8 V354.6 M1162.00,349.8 V354.6 M1172.51,349.8 V354.6 M1183.02,349.8 V354.6 M1193.53,349.8 V354.6 M1204.03,349.8 V354.6 M1214.54,349.8 V354.6 M1225.05,349.8 V354.6 M1235.55,349.8 V354.6 M1246.06,349.8 V354.6 M1256.57,349.8 V354.6 M1267.08,349.8 V354.6 M1277.58,349.8 V354.6 M1288.09,349.8 V354.6 M1298.60,349.8 V354.6 M1309.10,349.8 V354.6 M1319.61,349.8 V354.6 M1330.12,349.8 V354.6 M1340.62,349.8 V354.6 M1351.13,349.8 V354.6 M1361.64,349.8 V354.6" stroke="rgba(10,12,16,0.3)" stroke-width="0.8"/>
<rect x="721.75" y="461.00" width="10.4" height="3" rx="1" fill="#73BF69"/>
<text x="737.65" y="466.00" font-size="10" textLength="89.75" lengthAdjust="spacingAndGlyphs" >replica 9nwqj (usage)</text>
<rect x="835.00" y="461.00" width="10.4" height="3" rx="1" fill="#F2CC0C"/>
<text x="851.40" y="466.00" font-size="10" textLength="90.25" lengthAdjust="spacingAndGlyphs" >replica d2dwf (usage)</text>
<rect x="949.50" y="461.00" width="10.4" height="3" rx="1" fill="#8AB8FF"/>
<text x="965.65" y="466.00" font-size="10" textLength="87.75" lengthAdjust="spacingAndGlyphs" >replica dtz8c (usage)</text>
<rect x="1061.75" y="461.00" width="10.4" height="3" rx="1" fill="#FF780A"/>
<text x="1076.90" y="466.00" font-size="10" textLength="88.00" lengthAdjust="spacingAndGlyphs" >replica zd2ln (usage)</text>
<rect x="1172.50" y="461.00" width="10.4" height="3" rx="1" fill="#F2495C"/>
<text x="1188.15" y="466.00" font-size="10" textLength="83.50" lengthAdjust="spacingAndGlyphs" >replica 9nwqj (limit)</text>
<rect x="1278.75" y="461.00" width="10.4" height="3" rx="1" fill="#5794F2"/>
<text x="1294.40" y="466.00" font-size="10" textLength="84.25" lengthAdjust="spacingAndGlyphs" >replica d2dwf (limit)</text>
<rect x="721.75" y="476.75" width="10.4" height="3" rx="1" fill="#B877D9"/>
<text x="737.65" y="481.75" font-size="10" textLength="81.00" lengthAdjust="spacingAndGlyphs" >replica dtz8c (limit)</text>
<rect x="826.75" y="476.75" width="10.4" height="3" rx="1" fill="#705DA0"/>
<text x="841.90" y="481.75" font-size="10" textLength="81.00" lengthAdjust="spacingAndGlyphs" >replica zd2ln (limit)</text>
</svg>
</body></html>
